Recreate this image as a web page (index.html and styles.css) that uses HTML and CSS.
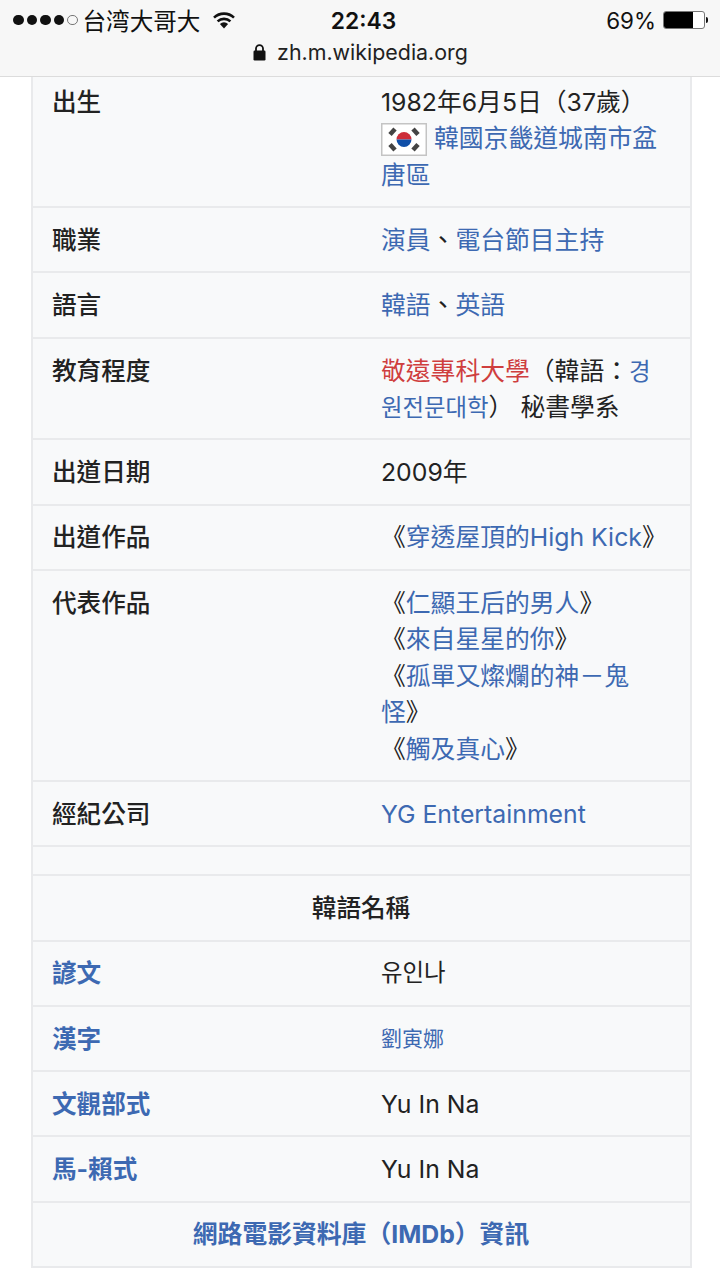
FILE: index.html

```html
<!DOCTYPE html>
<html lang="zh-Hant">
<head>
    <meta charset="UTF-8">
    <title>zh.m.wikipedia.org</title>
    <link rel="stylesheet" href="styles.css">
</head>
<body>
    <header class="browser-bar">
        <div class="status-row">
            <div class="status-left">
                <span class="signal">
                    <i class="dot"></i><i class="dot"></i><i class="dot"></i><i class="dot"></i><i class="dot empty"></i>
                </span>
                <span class="carrier">台湾大哥大</span>
                <svg class="wifi" width="24" height="18" viewBox="0 0 24 18">
                    <path d="M12 17.5 7.9 12.9a6 6 0 0 1 8.2 0z" fill="#111"/>
                    <path d="M5.6 10.4a9.4 9.4 0 0 1 12.8 0" fill="none" stroke="#111" stroke-width="2.6"/>
                    <path d="M2 6.6a14.6 14.6 0 0 1 20 0" fill="none" stroke="#111" stroke-width="2.6"/>
                </svg>
            </div>
            <div class="clock">22:43</div>
            <div class="status-right">
                <span class="percent">69%</span>
                <span class="battery"><span class="battery-level"></span></span>
                <span class="battery-tip"></span>
            </div>
        </div>
        <div class="url-row">
            <svg class="lock" width="13" height="17" viewBox="0 0 13 17">
                <path d="M3 7V4.6a3.5 3.5 0 0 1 7 0V7" fill="none" stroke="#111" stroke-width="1.8"/>
                <rect x="0.5" y="6.5" width="12" height="10" rx="1.2" fill="#111"/>
            </svg>
            <span>zh.m.wikipedia.org</span>
        </div>
    </header>

    <main class="infobox">
        <div class="row first">
            <div class="label">出生</div>
            <div class="value">1982年6月5日（37歲）<br>
                <svg class="flag" width="46" height="33" viewBox="0 0 46 33">
                    <rect x="0.75" y="0.75" width="44.5" height="31.5" fill="#fff" stroke="#c4c4c4" stroke-width="1.5"/>
                    <path d="M15.5 16.5a7.5 7.5 0 0 1 15 0z" fill="#cd2e3a"/>
                    <path d="M15.5 16.5a7.5 7.5 0 0 0 15 0z" fill="#0f4fa8"/>
                    <g stroke="#444" stroke-width="4.5">
                        <path d="M9 11.5 14 6"/>
                        <path d="M32 6 37 11.5"/>
                        <path d="M9 21.5 14 27"/>
                        <path d="M32 27 37 21.5"/>
                    </g>
                </svg>
                <a href="#">韓國京畿道城南市盆唐區</a>
            </div>
        </div>
        <div class="row">
            <div class="label">職業</div>
            <div class="value"><a href="#">演員</a>、<a href="#">電台節目主持</a></div>
        </div>
        <div class="row">
            <div class="label">語言</div>
            <div class="value"><a href="#">韓語</a>、<a href="#">英語</a></div>
        </div>
        <div class="row">
            <div class="label">教育程度</div>
            <div class="value"><a class="new" href="#">敬遠專科大學</a>（韓語：<a class="ko" href="#" lang="ko">경원전문대학</a>） 秘書學系</div>
        </div>
        <div class="row">
            <div class="label">出道日期</div>
            <div class="value">2009年</div>
        </div>
        <div class="row">
            <div class="label">出道作品</div>
            <div class="value">《<a href="#">穿透屋頂的High Kick</a>》</div>
        </div>
        <div class="row">
            <div class="label">代表作品</div>
            <div class="value">《<a href="#">仁顯王后的男人</a>》<br>《<a href="#">來自星星的你</a>》<br>《<a href="#">孤單又燦爛的神－鬼怪</a>》<br>《<a href="#">觸及真心</a>》</div>
        </div>
        <div class="row">
            <div class="label">經紀公司</div>
            <div class="value"><a href="#">YG Entertainment</a></div>
        </div>
        <div class="row spacer"></div>
        <div class="row wide"><strong>韓語名稱</strong></div>
        <div class="row">
            <div class="label link"><a href="#">諺文</a></div>
            <div class="value ko" lang="ko">유인나</div>
        </div>
        <div class="row">
            <div class="label link"><a href="#">漢字</a></div>
            <div class="value small"><a href="#">劉寅娜</a></div>
        </div>
        <div class="row">
            <div class="label link"><a href="#">文觀部式</a></div>
            <div class="value">Yu In Na</div>
        </div>
        <div class="row">
            <div class="label link"><a href="#">馬-賴式</a></div>
            <div class="value">Yu In Na</div>
        </div>
        <div class="row wide"><a class="imdb" href="#">網路電影資料庫（IMDb）資訊</a></div>
    </main>
</body>
</html>
```

FILE: styles.css

```css
html, body { margin: 0; padding: 0; background: #fff; }
body {
    width: 720px;
    height: 1280px;
    overflow: hidden;
    font-family: Inter, "Noto Sans CJK TC", sans-serif;
    color: #222;
}
[lang="ko"] { font-family: Inter, "Noto Sans CJK KR", sans-serif; }
a { color: #3d69b2; text-decoration: none; }
a.new { color: #cf3e3e; }

.browser-bar {
    height: 76px;
    background: #f7f7f7;
    border-bottom: 1px solid #dcdcdc;
    color: #111;
}
.status-row {
    display: grid;
    grid-template-columns: 1fr auto 1fr;
    align-items: center;
    height: 40px;
    padding: 0 12px 0 13px;
}
.status-left { display: flex; align-items: center; }
.signal { display: flex; gap: 3px; margin-right: 5px; }
.dot { width: 10.5px; height: 10.5px; border-radius: 50%; background: #111; }
.dot.empty { box-sizing: border-box; background: none; border: 1px solid #777; }
.carrier { font-size: 23.6px; }
.wifi { margin-left: 12px; }
.clock { margin-left: 6px; font-size: 22.8px; font-weight: 600; }
.status-right { display: flex; align-items: center; justify-content: flex-end; }
.percent { font-size: 22.4px; margin-right: 7px; }
.battery {
    box-sizing: border-box;
    display: block;
    width: 42px;
    height: 18px;
    border: 1px solid #777;
    border-radius: 3px;
    background: #fff;
    overflow: hidden;
}
.battery-level { display: block; width: 29px; height: 100%; background: #000; }
.battery-tip { width: 2px; height: 6px; margin-left: 1px; background: #111; border-radius: 0 2px 2px 0; }
.url-row {
    display: flex;
    justify-content: center;
    align-items: center;
    gap: 11px;
    height: 24px;
    padding-left: 1px;
    font-size: 21.4px;
    color: #222;
}

.infobox {
    box-sizing: border-box;
    width: 661px;
    margin-left: 31px;
    background: #f8f9fa;
    border: solid #e9eaec;
    border-width: 0 2px 2px 2px;
    font-size: 24.8px;
    line-height: 36.5px;
}
.row {
    display: grid;
    grid-template-columns: 329px 1fr;
    padding: 13.8px 20px 12.95px 19px;
    border-bottom: 2px solid #e9eaec;
}
.row:last-child { border-bottom: 0; }
.row.first { padding-top: 6.8px; }
.row.spacer { height: 0; padding: 13.5px 0; }
.row.wide { display: block; text-align: center; }
.label { font-size: 24.6px; font-weight: 500; }
.label.link { font-weight: 700; }
.row.wide strong { font-size: 24.6px; font-weight: 500; }
a.imdb { font-weight: 700; }
a.ko, .value.ko { font-size: 23.4px; line-height: 1; }
.value.ko { line-height: 36.5px; }
.value.small { font-size: 21px; }
.flag { vertical-align: -9px; }
```
